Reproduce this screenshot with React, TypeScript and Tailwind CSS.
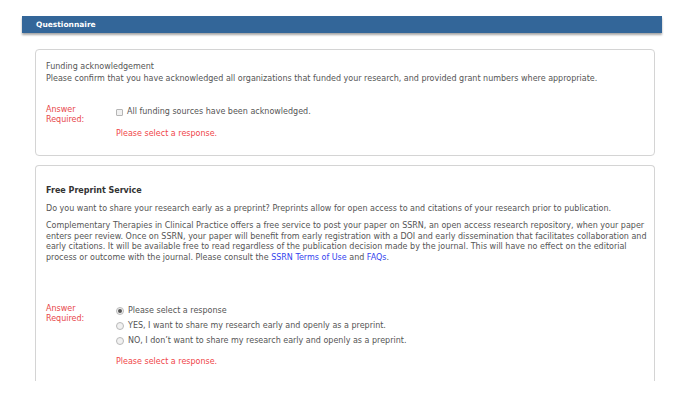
import React from "react";

const font = "font-['DejaVu_Sans',Verdana,sans-serif]";

function AnswerLabel() {
  return (
    <div className="w-[70px] shrink-0 pt-[1px] leading-[10px] text-[#e8474a]">
      Answer
      <br />
      Required:
    </div>
  );
}

function Radio({ checked }: { checked?: boolean }) {
  return (
    <span className="mr-[4px] inline-flex h-[8px] w-[8px] shrink-0 items-center justify-center rounded-full border border-[#b9b9b9] bg-[#f1f1f1]">
      {checked && <span className="h-[4px] w-[4px] rounded-full bg-[#555]" />}
    </span>
  );
}

export default function App() {
  const options = [
    { label: "Please select a response", checked: true },
    { label: "YES, I want to share my research early and openly as a preprint." },
    { label: "NO, I don\u2019t want to share my research early and openly as a preprint." },
  ];

  return (
    <div className={`h-[396px] w-[673px] overflow-hidden bg-white text-[8px] text-[#555] ${font}`}>
      <div className="ml-[22px] mt-[16px] flex h-[17px] w-[640px] items-center bg-[#336699] pl-[14px] shadow-[0_2px_2px_rgba(0,0,0,0.35)]">
        <span className="text-[7.5px] font-bold text-white">Questionnaire</span>
      </div>

      <div className="ml-[35px] mt-[16px] h-[107px] w-[620px] rounded-[4px] border border-[#d4d4d4] px-[10px] pt-[11px]">
        <div className="leading-[11px]">Funding acknowledgement</div>
        <div className="pt-[1px] leading-[11px]">
          Please confirm that you have acknowledged all organizations that funded your research, and provided grant
          numbers where appropriate.
        </div>
        <div className="mt-[20px] flex">
          <AnswerLabel />
          <div>
            <label className="mt-[2px] flex items-center">
              <span className="mr-[4px] inline-block h-[7px] w-[7px] rounded-[1px] border border-[#b5b5b5] bg-[#f1f1f1]" />
              All funding sources have been acknowledged.
            </label>
            <div className="mt-[10px] text-[#f0464a]">Please select a response.</div>
          </div>
        </div>
      </div>

      <div className="ml-[35px] mt-[9px] h-[216px] w-[620px] rounded-t-[4px] border border-b-0 border-[#d4d4d4] px-[10px] pt-[19px]">
        <div className="font-bold leading-[11px] text-[#333]">Free Preprint Service</div>
        <div className="mt-[7px] leading-[11px]">
          Do you want to share your research early as a preprint? Preprints allow for open access to and citations of
          your research prior to publication.
        </div>
        <div className="mt-[7px] whitespace-nowrap leading-[10.5px]">
          Complementary Therapies in Clinical Practice offers a free service to post your paper on SSRN, an open access
          research repository, when your paper
          <br />
          enters peer review. Once on SSRN, your paper will benefit from early registration with a DOI and early
          dissemination that facilitates collaboration and
          <br />
          early citations. It will be available free to read regardless of the publication decision made by the
          journal. This will have no effect on the editorial
          <br />
          process or outcome with the journal. Please consult the{" "}
          <a className="text-[#3344ee]">SSRN Terms of Use</a> and <a className="text-[#3344ee]">FAQs</a>.
        </div>
        <div className="mt-[40px] flex">
          <AnswerLabel />
          <div>
            <div className="flex flex-col gap-[5px] pt-[3px]">
              {options.map((o) => (
                <label key={o.label} className="flex h-[10px] items-center">
                  <Radio checked={o.checked} />
                  {o.label}
                </label>
              ))}
            </div>
            <div className="mt-[10px] text-[#f0464a]">Please select a response.</div>
          </div>
        </div>
      </div>
    </div>
  );
}
